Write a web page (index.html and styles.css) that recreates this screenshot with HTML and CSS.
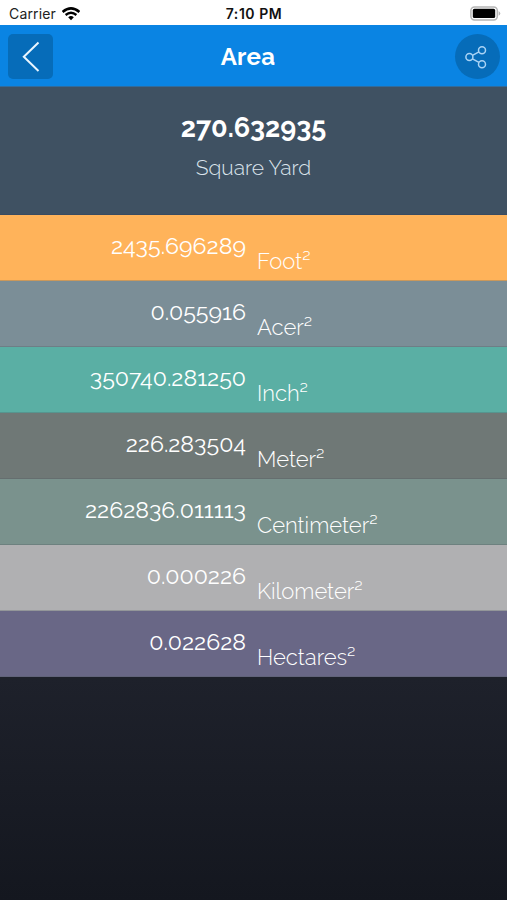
FILE: index.html
```html
<!DOCTYPE html>
<html lang="en">
<head>
    <meta charset="UTF-8">
    <meta name="viewport" content="width=device-width, initial-scale=1.0">
    <title>Area</title>
    <link rel="stylesheet" href="styles.css">
</head>
<body>
    <div class="status-bar">
        <div class="carrier">
            <span>Carrier</span>
            <svg class="wifi" width="18" height="14" viewBox="0 0 18 14">
                <path d="M0.6 5 Q9 -2.2 17.4 5" fill="none" stroke="#000" stroke-width="2.5"/>
                <path d="M3.6 8 Q9 3.4 14.4 8" fill="none" stroke="#000" stroke-width="2.3"/>
                <path d="M6.2 10.3 Q9 7.8 11.8 10.3 L9 13.3 Z" fill="#000"/>
            </svg>
        </div>
        <div class="clock">7:10 PM</div>
        <svg class="battery" width="31" height="15" viewBox="0 0 31 15">
            <rect x="0.9" y="0.9" width="26.4" height="13" rx="3.6" fill="#fff" stroke="#b5b5b5" stroke-width="1.5"/>
            <rect x="2.8" y="2.8" width="22.4" height="9.2" rx="1.6" fill="#000"/>
            <path d="M28.6 5 Q32 7.4 28.6 9.8 Z" fill="#b5b5b5"/>
        </svg>
    </div>

    <div class="header">
        <button class="back" aria-label="Back">
            <svg width="45" height="45" viewBox="0 0 45 45">
                <path d="M30.5 8.5 L15.8 22.7 L30.5 37" fill="none" stroke="#eaf6ff" stroke-width="2"/>
            </svg>
        </button>
        <h1>Area</h1>
        <button class="share" aria-label="Share">
            <svg width="45" height="45" viewBox="0 0 45 45" fill="none" stroke="#a9d3f5" stroke-width="1.5">
                <circle cx="14.4" cy="23" r="3.5"/>
                <circle cx="27" cy="16.3" r="3.5"/>
                <circle cx="27" cy="30.2" r="3.5"/>
                <path d="M17.5 21.3 L23.9 17.9 M17.4 24.8 L24 28.4"/>
            </svg>
        </button>
    </div>

    <div class="summary">
        <div class="total">270.632935</div>
        <div class="unit-name">Square Yard</div>
    </div>

    <div class="results">
        <div class="row foot">
            <span class="value">2435.696289</span>
            <span class="unit">Foot²</span>
        </div>
        <div class="row acer">
            <span class="value">0.055916</span>
            <span class="unit">Acer²</span>
        </div>
        <div class="row inch">
            <span class="value">350740.281250</span>
            <span class="unit">Inch²</span>
        </div>
        <div class="row meter">
            <span class="value">226.283504</span>
            <span class="unit">Meter²</span>
        </div>
        <div class="row centimeter">
            <span class="value">2262836.011113</span>
            <span class="unit">Centimeter²</span>
        </div>
        <div class="row kilometer">
            <span class="value">0.000226</span>
            <span class="unit">Kilometer²</span>
        </div>
        <div class="row hectares">
            <span class="value">0.022628</span>
            <span class="unit">Hectares²</span>
        </div>
    </div>
</body>
</html>
```
FILE: styles.css
```css
* {
    box-sizing: border-box;
}
body {
    margin: 0;
    height: 900px;
    overflow: hidden;
    font-family: Raleway, Lato, sans-serif;
    color: #fff;
    background: linear-gradient(#3f5162 87px, #1e212b 677px, #14171f 900px);
}
.status-bar {
    display: grid;
    grid-template-columns: 1fr auto 1fr;
    align-items: center;
    height: 25px;
    padding: 2px 6px 0 9px;
    background-color: #fff;
    color: #111;
    font-family: Inter, sans-serif;
    font-size: 14px;
}
.carrier {
    display: flex;
    align-items: center;
    gap: 6px;
    color: #222;
    letter-spacing: 0.15px;
}
.clock {
    margin-right: 2px;
    font-weight: 600;
    font-size: 14px;
    letter-spacing: 0.55px;
}
.battery {
    justify-self: end;
}
.header {
    display: flex;
    align-items: center;
    justify-content: space-between;
    height: 62px;
    padding: 1px 7px 0 8px;
    background-color: #0a84e3;
    border-bottom: 1px solid #306b9c;
}
.header h1 {
    margin: 0 12px 0 0;
    font-size: 24px;
    font-weight: 700;
    letter-spacing: 0.3px;
}
button {
    width: 45px;
    height: 45px;
    padding: 0;
    border: none;
    background-color: #066cb9;
    cursor: pointer;
}
button svg {
    display: block;
}
.back {
    border-radius: 5px;
}
.share {
    border-radius: 50%;
}
.summary {
    height: 128px;
    padding-top: 24px;
    text-align: center;
    background-color: #3f5162;
    border-bottom: 1px solid #394b61;
}
.total {
    font-size: 27px;
    line-height: 34px;
    font-weight: 700;
}
.unit-name {
    margin-top: 8px;
    font-size: 21px;
    line-height: 30px;
    font-weight: 300;
    color: #dce5ed;
}
.row {
    display: grid;
    grid-template-columns: 246px 1fr;
    column-gap: 11px;
    height: 66px;
    border-bottom: 1px solid rgba(80, 90, 95, 0.3);
    line-height: 30px;
}
.value {
    padding-top: 16px;
    font-size: 23.2px;
    text-align: right;
}
.unit {
    padding-top: 31px;
    font-size: 22px;
    font-weight: 300;
}
.foot {
    background-color: #ffb35a;
}
.acer {
    background-color: #7b8e97;
}
.inch {
    background-color: #5aafa4;
}
.meter {
    background-color: #6f7876;
}
.centimeter {
    background-color: #7a928d;
}
.kilometer {
    background-color: #b0b0b2;
}
.hectares {
    background-color: #696786;
}
```
